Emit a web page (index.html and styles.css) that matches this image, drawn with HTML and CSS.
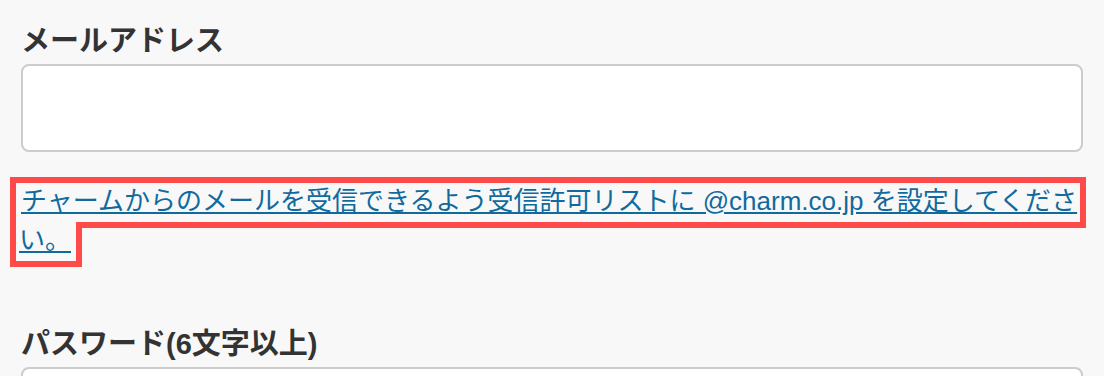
FILE: index.html
```html
<!DOCTYPE html>
<html lang="ja">
<head>
  <meta charset="UTF-8" />
  <meta name="viewport" content="width=device-width, initial-scale=1.0" />
  <title>会員登録</title>
  <link rel="stylesheet" href="styles.css">
</head>

<body>
  <form class="form">
    <div class="field">
      <label class="field-label" for="email">メールアドレス</label>
      <input class="field-input" id="email" type="email" />
    </div>

    <p class="notice"><a class="notice-link" href="#">チャームからのメールを受信できるよう受信許可リストに @charm.co.jp を設定してください。</a></p>

    <div class="field">
      <label class="field-label" for="password">パスワード(6文字以上)</label>
      <input class="field-input" id="password" type="password" />
    </div>
  </form>
</body>
</html>
```

FILE: styles.css
```css
html, body {
  margin: 0;
  padding: 0;
  background-color: #f8f8f8;
  font-family: "Liberation Sans", "Noto Sans CJK JP", sans-serif;
  color: #333;
  overflow: hidden;
}

.form {
  width: 1062px;
  padding: 19px 21px 0;
  margin: 0;
}

.field-label {
  display: block;
  font-size: 29px;
  font-weight: bold;
  line-height: 44px;
  margin-bottom: 1px;
  color: #333;
}

.field-input {
  display: block;
  width: 100%;
  height: 88px;
  box-sizing: border-box;
  margin: 0;
  border: 2px solid #cccccc;
  border-radius: 8px;
  background-color: #fff;
}

.notice {
  font-size: 26px;
  line-height: 39px;
  margin: 29.5px 0 62.5px -2px;
}

/* highlighted link */
.notice-link {
  color: #106a9e;
  text-decoration: underline;
  padding: 0 2px 3px 2px;
  outline: 6px solid #ff4a4a;
  outline-offset: 3px;
}
```
